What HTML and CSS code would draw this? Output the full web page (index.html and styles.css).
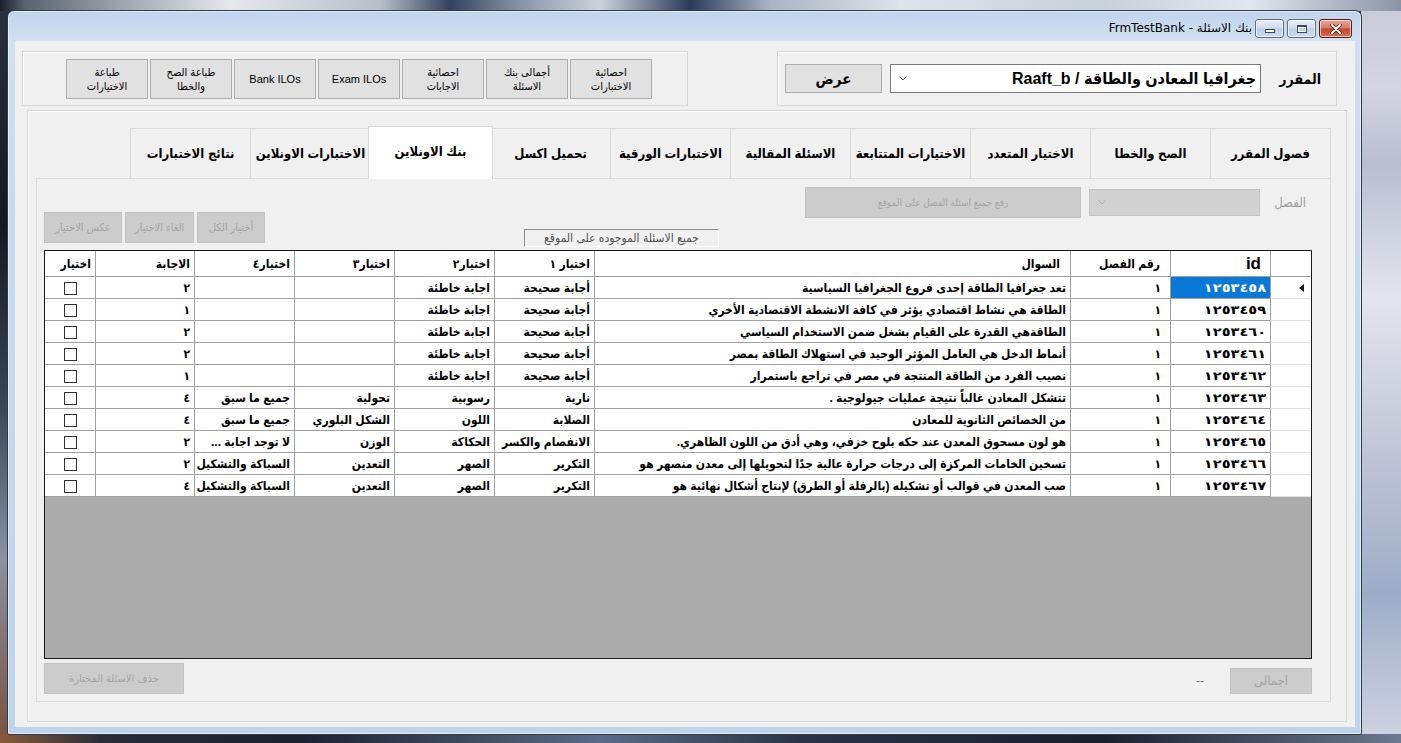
FILE: index.html
```html
<!DOCTYPE html>
<html lang="ar">
<head>
    <meta charset="UTF-8">
    <title>FrmTestBank</title>
    <link rel="stylesheet" href="styles.css">
</head>
<body>
<div class="window">
    <div class="titlebar">
        <span class="title" dir="rtl">بنك الاسئلة - FrmTestBank</span>
        <div class="caption">
            <span class="cap cap-min"><i></i></span>
            <span class="cap cap-max"><i></i></span>
            <span class="cap cap-close">
                <svg width="12" height="10" viewBox="0 0 12 10">
                    <path d="M2 1 L10 9 M10 1 L2 9" stroke="#5a1a10" stroke-width="3.6" stroke-linecap="round"/>
                    <path d="M2 1 L10 9 M10 1 L2 9" stroke="#fff" stroke-width="2" stroke-linecap="round"/>
                </svg>
            </span>
        </div>
    </div>

    <div class="client" dir="rtl">
        <div class="top-row">
            <div class="group course-box">
                <span class="course-label">المقرر</span>
                <div class="combo">
                    <span class="combo-text">جغرافيا المعادن والطاقة / Raaft_b</span>
                    <svg class="combo-arrow" width="8" height="5" viewBox="0 0 8 5"><path d="M0.5 0.5 L4 4 L7.5 0.5" fill="none" stroke="#666" stroke-width="1"/></svg>
                </div>
                <button class="btn btn-show">عرض</button>
            </div>
            <div class="group reports-box">
                <button class="btn btn-report">احصائية<br>الاختبارات</button>
                <button class="btn btn-report">أجمالى بنك<br>الاسئلة</button>
                <button class="btn btn-report">احصائية<br>الاجابات</button>
                <button class="btn btn-report">Exam ILOs</button>
                <button class="btn btn-report">Bank ILOs</button>
                <button class="btn btn-report">طباعة الصح<br>والخطا</button>
                <button class="btn btn-report">طباعة<br>الاختيارات</button>
            </div>
        </div>

        <div class="main-panel">
            <div class="tabs">
                <div class="tab">فصول المقرر</div>
                <div class="tab">الصح والخطا</div>
                <div class="tab">الاختيار المتعدد</div>
                <div class="tab">الاختيارات المتتابعة</div>
                <div class="tab">الاسئلة المقالية</div>
                <div class="tab">الاختبارات الورقية</div>
                <div class="tab">تحميل اكسل</div>
                <div class="tab active">بنك الاونلاين</div>
                <div class="tab">الاختبارات الاونلاين</div>
                <div class="tab">نتائج الاختبارات</div>
            </div>

            <div class="tab-page">
                <div class="toolbar">
                    <div class="chapter-row">
                        <span class="chapter-label">الفصل</span>
                        <div class="combo combo-off">
                            <svg class="combo-arrow" width="8" height="5" viewBox="0 0 8 5"><path d="M0.5 0.5 L4 4 L7.5 0.5" fill="none" stroke="#aaa" stroke-width="1"/></svg>
                        </div>
                        <button class="btn btn-off btn-upload">رفع جميع اسئلة الفصل على الموقع</button>
                    </div>
                    <div class="site-label">جميع الاسئلة الموجوده على الموقع</div>
                    <div class="select-btns">
                        <button class="btn btn-off btn-all">أختيار الكل</button>
                        <button class="btn btn-off btn-none">الغاء الاختيار</button>
                        <button class="btn btn-off btn-invert">عكس الاختيار</button>
                    </div>
                </div>

                <div class="grid">
                    <table>
                        <colgroup>
                            <col class="c-rh">
                            <col class="c-100">
                            <col class="c-100">
                            <col>
                            <col class="c-100">
                            <col class="c-100">
                            <col class="c-100">
                            <col class="c-100">
                            <col class="c-99">
                            <col class="c-50">
                        </colgroup>
                        <thead>
                        <tr>
                            <th class="rh"></th>
                            <th class="h-id">id</th>
                            <th class="h-wide">رقم الفصل</th>
                            <th class="h-wide">السوال</th>
                            <th>اختيار ١</th>
                            <th>اختيار٢</th>
                            <th>اختيار٣</th>
                            <th>اختيار٤</th>
                            <th>الاجابة</th>
                            <th>اختيار</th>
                        </tr>
                        </thead>
                        <tbody>
                        <tr>
                            <td class="rh"><span class="row-arrow"></span></td>
                            <td class="num selected"><span>١٢٥٣٤٥٨</span></td><td class="ch">١</td>
                            <td>تعد جغرافيا الطاقة إحدى فروع الجغرافيا السياسية</td>
                            <td>أجابة صحيحة</td><td>اجابة خاطئة</td><td></td><td></td>
                            <td>٢</td><td class="chk"><span class="box"></span></td>
                        </tr>
                        <tr>
                            <td class="rh"></td>
                            <td class="num"><span>١٢٥٣٤٥٩</span></td><td class="ch">١</td>
                            <td>الطاقة هي نشاط اقتصادي يؤثر في كافة الانشطة الاقتصادية الأخري</td>
                            <td>أجابة صحيحة</td><td>اجابة خاطئة</td><td></td><td></td>
                            <td>١</td><td class="chk"><span class="box"></span></td>
                        </tr>
                        <tr>
                            <td class="rh"></td>
                            <td class="num"><span>١٢٥٣٤٦٠</span></td><td class="ch">١</td>
                            <td>الطاقةهي القدرة على القيام بشغل ضمن الاستخدام السياسي</td>
                            <td>أجابة صحيحة</td><td>اجابة خاطئة</td><td></td><td></td>
                            <td>٢</td><td class="chk"><span class="box"></span></td>
                        </tr>
                        <tr>
                            <td class="rh"></td>
                            <td class="num"><span>١٢٥٣٤٦١</span></td><td class="ch">١</td>
                            <td>أنماط الدخل هي العامل المؤثر الوحيد في استهلاك الطاقة بمصر</td>
                            <td>أجابة صحيحة</td><td>اجابة خاطئة</td><td></td><td></td>
                            <td>٢</td><td class="chk"><span class="box"></span></td>
                        </tr>
                        <tr>
                            <td class="rh"></td>
                            <td class="num"><span>١٢٥٣٤٦٢</span></td><td class="ch">١</td>
                            <td>نصيب الفرد من الطاقة  المنتجة في مصر في تراجع باستمرار</td>
                            <td>أجابة صحيحة</td><td>اجابة خاطئة</td><td></td><td></td>
                            <td>١</td><td class="chk"><span class="box"></span></td>
                        </tr>
                        <tr>
                            <td class="rh"></td>
                            <td class="num"><span>١٢٥٣٤٦٣</span></td><td class="ch">١</td>
                            <td>تتشكل  المعادن غالباً نتيجة عمليات جيولوجية .</td>
                            <td>نارية</td><td>رسوبية</td><td>تحولية</td><td>جميع ما سبق</td>
                            <td>٤</td><td class="chk"><span class="box"></span></td>
                        </tr>
                        <tr>
                            <td class="rh"></td>
                            <td class="num"><span>١٢٥٣٤٦٤</span></td><td class="ch">١</td>
                            <td>من الخصائص الثانوية  للمعادن</td>
                            <td>الصلابة</td><td>اللون</td><td>الشكل البلوري</td><td>جميع ما سبق</td>
                            <td>٤</td><td class="chk"><span class="box"></span></td>
                        </tr>
                        <tr>
                            <td class="rh"></td>
                            <td class="num"><span>١٢٥٣٤٦٥</span></td><td class="ch">١</td>
                            <td>هو لون مسحوق المعدن عند حكه بلوح خزفي، وهي أدق من اللون الظاهري.</td>
                            <td>الانفصام والكسر</td><td>الحكاكة</td><td>الوزن</td><td>لا توجد اجابة ...</td>
                            <td>٢</td><td class="chk"><span class="box"></span></td>
                        </tr>
                        <tr>
                            <td class="rh"></td>
                            <td class="num"><span>١٢٥٣٤٦٦</span></td><td class="ch">١</td>
                            <td>تسخين الخامات المركزة إلى درجات حرارة عالية جدًا لتحويلها إلى معدن منصهر هو</td>
                            <td>التكرير</td><td>الصهر</td><td>التعدين</td><td>السباكة والتشكيل</td>
                            <td>٢</td><td class="chk"><span class="box"></span></td>
                        </tr>
                        <tr>
                            <td class="rh"></td>
                            <td class="num"><span>١٢٥٣٤٦٧</span></td><td class="ch">١</td>
                            <td>صب المعدن في قوالب أو تشكيله (بالرفلة أو الطرق) لإنتاج أشكال نهائية هو</td>
                            <td>التكرير</td><td>الصهر</td><td>التعدين</td><td>السباكة والتشكيل</td>
                            <td>٤</td><td class="chk"><span class="box"></span></td>
                        </tr>
                        </tbody>
                    </table>
                </div>

                <div class="bottom-row">
                    <button class="btn btn-off btn-total">اجمالى</button>
                    <span class="total-value">--</span>
                    <button class="btn btn-off btn-delete">حذف الاسئلة المختارة</button>
                </div>
            </div>
        </div>
    </div>
</div>
</body>
</html>
```

FILE: styles.css
```css
*{
    box-sizing: border-box;
}
body{
    margin: 0;
    width: 1401px;
    height: 743px;
    overflow: hidden;
    position: relative;
    font-family: "Liberation Sans", "DejaVu Sans Condensed", "DejaVu Sans", sans-serif;
    background:
        linear-gradient(90deg, #1a1f2b 0, #5a6270 25px, #9ea4ad 120px, #e6e8ec 230px, #b8bfca 380px, #34425e 450px, #8895a8 520px, #cdd3dc 600px, #2b3a5a 690px, #aab4c3 770px, #dfe3ea 900px, #c8d0dc 1100px, #e4e6ee 1250px, #8b93a6 1401px) top / 100% 11px no-repeat,
        linear-gradient(90deg, #8a5a3a 0, #2a2d38 100px, #1c2130 300px, #5b6b85 600px, #2a3348 800px, #1a1f2c 1100px, #6c7890 1401px) bottom / 100% 9px no-repeat,
        linear-gradient(180deg, #c9cad8 0, #d4d5e2 12%, #b9bdd0 22%, #e3e5ee 40%, #c2c6d6 60%, #9eacc8 80%, #d0d4e2 100%) right / 40px 100% no-repeat,
        linear-gradient(180deg, #2a3140 0, #141821 30%, #3b4658 55%, #8a92a0 75%, #7a5040 100%);
}

/* window frame */
.window{
    position: absolute;
    left: 7px;
    top: 10px;
    width: 1355px;
    height: 725px;
    border: 1px solid #2f3a48;
    border-radius: 7px 7px 2px 2px;
    background: linear-gradient(180deg, #c0d4ec 0, #d0dff1 28px, #cadbef 140px, #bfd3eb 100%);
    padding: 0 6px 7px 7px;
    display: flex;
    flex-direction: column;
    box-shadow: inset 0 0 0 1px rgba(255,255,255,0.55);
}
.titlebar{
    height: 30px;
    flex: none;
    display: flex;
    justify-content: flex-end;
    align-items: flex-start;
    padding: 8px 3px 0 0;
}
.title{
    font-family: "DejaVu Sans", sans-serif;
    font-size: 12px;
    line-height: 18px;
    color: #000;
    margin-right: 3px;
}
.caption{
    display: flex;
    gap: 3px;
}
.cap{
    height: 19px;
    width: 29px;
    border: 1px solid #5f6f86;
    border-radius: 3px;
    display: flex;
    align-items: center;
    justify-content: center;
    background: linear-gradient(180deg, #e6eef8 0, #d0ddee 48%, #bccee6 52%, #cddcef 100%);
    box-shadow: inset 0 0 0 1px rgba(255,255,255,0.6);
}
.cap-min i{
    display: block;
    width: 10px;
    height: 4px;
    margin-top: 5px;
    background: #fff;
    border: 1px solid #3e4a5c;
}
.cap-max i{
    display: block;
    width: 10px;
    height: 8px;
    background: transparent;
    border: 1px solid #3e4a5c;
    border-top-width: 2px;
    box-shadow: inset 0 0 0 1px #fff;
}
.cap-close{
    width: 33px;
    border-color: #5a1f14;
    background: linear-gradient(180deg, #e9a899 0, #d67a66 48%, #c2472d 52%, #d2715a 100%);
}

/* form body */
.client{
    flex: 1;
    background: #f0f0f0;
    display: flex;
    flex-direction: column;
}
.top-row{
    height: 55px;
    margin: 10px 18px 0 7px;
    display: flex;
    justify-content: space-between;
    flex: none;
}
.group{
    border: 1px solid #d5d5d5;
    box-shadow: inset 1px 1px 0 #fff;
    display: flex;
}
.reports-box{
    width: 666px;
    padding: 7px 35px 0 0;
    gap: 2px;
    align-items: flex-start;
}
.course-box{
    width: 560px;
    padding: 0 7px 0 7px;
    align-items: center;
}
.btn{
    font-family: "Liberation Sans", "DejaVu Sans Condensed", "DejaVu Sans", sans-serif;
    background: #e1e1e1;
    border: 1px solid #adadad;
    color: #000;
    padding: 0;
    margin: 0;
}
.btn-report{
    width: 82px;
    height: 40px;
    font-size: 11px;
    line-height: 14px;
}
.course-label{
    width: 68px;
    padding-right: 8px;
    font-size: 14px;
    font-weight: bold;
    text-align: right;
}
.combo{
    width: 371px;
    height: 29px;
    background: #fff;
    border: 1px solid #7a7a7a;
    display: flex;
    align-items: center;
    justify-content: space-between;
    padding: 0 4px 0 8px;
}
.combo-text{
    font-size: 16px;
    font-weight: bold;
    white-space: nowrap;
}
.btn-show{
    width: 97px;
    height: 29px;
    margin-right: 8px;
    font-size: 15px;
    font-weight: bold;
}

/* tab control */
.main-panel{
    flex: 1;
    margin: 4px 8px 5px 12px;
    border: 1px solid #d5d5d5;
    box-shadow: inset 1px 1px 0 #fff;
    padding: 0 15px 0 8px;
    display: flex;
    flex-direction: column;
}
.tabs{
    height: 50px;
    margin-top: 17px;
    display: flex;
    align-items: flex-end;
    flex: none;
}
.tab{
    width: 121px;
    height: 50px;
    margin-left: -1px;
    border: 1px solid #d9d9d9;
    border-bottom: none;
    background: #f0f0f0;
    display: flex;
    align-items: center;
    justify-content: center;
    font-size: 13px;
    font-weight: bold;
    white-space: nowrap;
}
.tab.active{
    width: 125px;
    height: 53px;
    margin: 0 -2px -1px -3px;
    background: #fff;
    position: relative;
    z-index: 1;
    padding-bottom: 4px;
}
.tab-page{
    flex: 1;
    border: 1px solid #d9d9d9;
    background: #f0f0f0;
    margin-bottom: 19px;
    padding: 0 18px 7px 7px;
    display: flex;
    flex-direction: column;
}
.toolbar{
    height: 71px;
    flex: none;
    display: flex;
    align-items: flex-start;
}
.chapter-row{
    display: flex;
    align-items: center;
    margin-top: 8px;
}
.chapter-label{
    width: 52px;
    padding-right: 6px;
    font-size: 13px;
    color: #a0a0a0;
}
.combo-off{
    width: 171px;
    height: 27px;
    background: #d1d1d1;
    border-color: #c4c4c4;
    justify-content: flex-end;
}
.btn-off{
    background: #cccccc;
    border: 1px solid #c2c2c2;
    color: #a4a4a4;
    font-size: 10px;
}
.btn-upload{
    width: 276px;
    height: 31px;
    margin-right: 8px;
}
.site-label{
    width: 195px;
    height: 18px;
    margin: 50px 86px 0 0;
    border: 1px solid;
    border-color: #8c8c8c #fff #fff #8c8c8c;
    font-size: 12px;
    line-height: 16px;
    color: #505050;
    text-align: center;
    white-space: nowrap;
}
.select-btns{
    display: flex;
    gap: 3px;
    margin: 33px auto 0 0;
}
.select-btns .btn{
    height: 31px;
    font-size: 11px;
}
.btn-all{width: 68px;}
.btn-none{width: 69px;}
.btn-invert{width: 78px;}

/* data grid */
.grid{
    height: 409px;
    flex: none;
    border: 1px solid #1a1a1a;
    background: #ababab;
    overflow: hidden;
}
.grid table{
    width: 100%;
    table-layout: fixed;
    border-collapse: separate;
    border-spacing: 0;
    background: #fff;
    font-size: 12px;
    font-weight: bold;
    color: #000;
}
.c-rh{width: 41px;}
.c-100{width: 100px;}
.c-99{width: 99px;}
.c-50{width: 50px;}
.grid th, .grid td{
    box-sizing: content-box;
    height: 21px;
    padding: 0 4px 0 1px;
    border-left: 1px solid #a0a0a0;
    border-bottom: 1px solid #a0a0a0;
    text-align: right;
    white-space: nowrap;
    overflow: hidden;
}
.grid th{
    height: 25px;
    padding-right: 4px;
}
.grid tr > :last-child{
    border-left: none;
}
.grid .h-id{
    font-size: 17px;
    padding-right: 9px;
}
.grid .h-wide{
    padding-right: 10px;
}
.grid td.ch{
    padding-right: 9px;
}
.grid td.num{
    padding-right: 4px;
}
.grid td.num span{
    display: inline-block;
    transform: scaleX(1.35);
    transform-origin: right center;
}
.grid td.selected{
    background: #0a78d7;
    color: #fff;
}
.grid .rh{
    border-bottom-color: #e0e0e0;
    position: relative;
}
.grid thead .rh{
    border-bottom-color: #a0a0a0;
}
.row-arrow{
    position: absolute;
    right: 7px;
    top: 7px;
    border-right: 5px solid #1a1a1a;
    border-top: 4px solid transparent;
    border-bottom: 4px solid transparent;
    width: 0;
    height: 0;
}
.grid td.chk{
    text-align: center;
    padding: 0;
}
.box{
    display: inline-block;
    width: 13px;
    height: 13px;
    border: 1px solid #333;
    background: #fff;
    vertical-align: middle;
}

/* footer */
.bottom-row{
    height: 31px;
    margin-top: 4px;
    display: flex;
    align-items: center;
    flex: none;
}
.btn-total{
    width: 82px;
    height: 26px;
    margin-top: 4px;
    font-size: 13px;
}
.total-value{
    margin: 5px 26px 0 0;
    font-size: 12px;
    color: #6d6d6d;
}
.btn-delete{
    width: 140px;
    height: 31px;
    margin-right: auto;
    font-size: 11px;
}
```
